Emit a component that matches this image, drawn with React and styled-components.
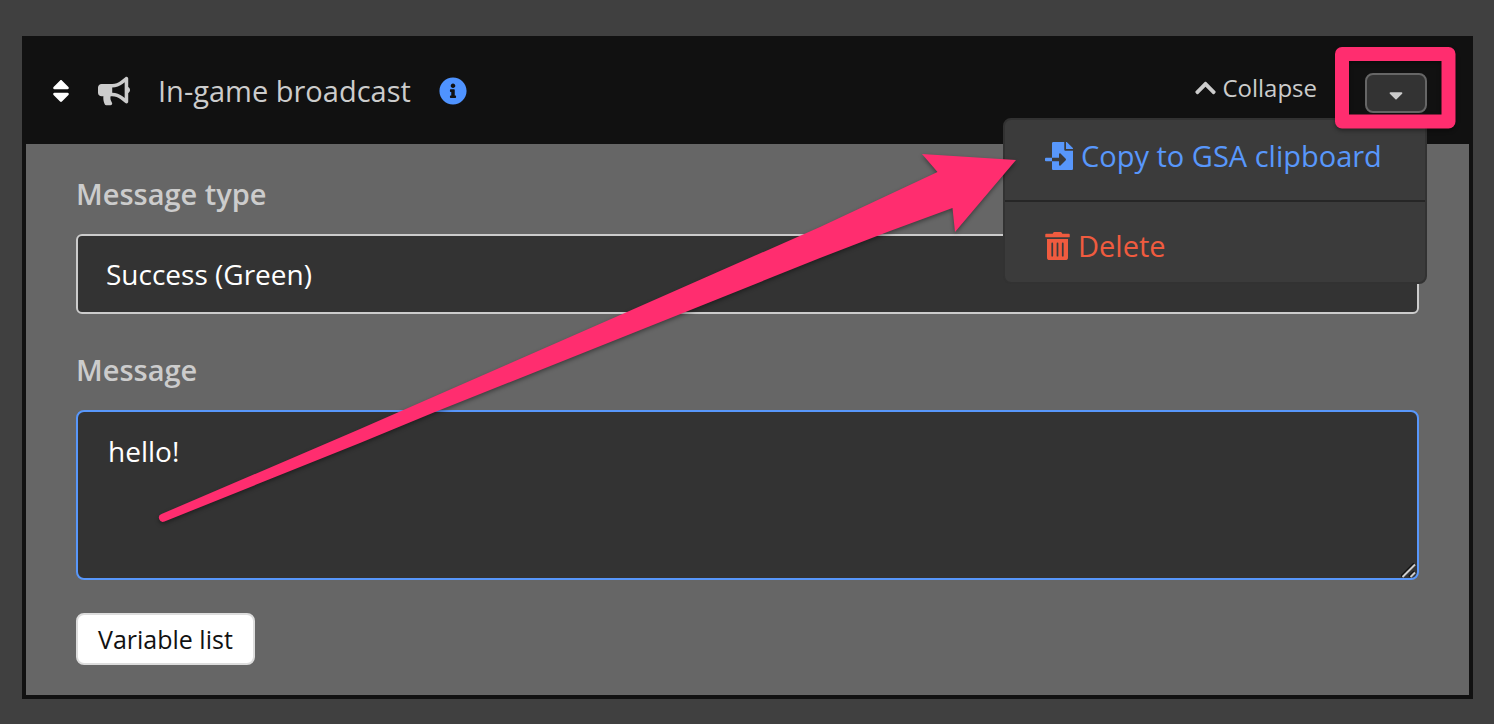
import React from "react";
import styled, { createGlobalStyle } from "styled-components";
import {
  FaSort,
  FaBullhorn,
  FaInfoCircle,
  FaCaretDown,
  FaChevronUp,
  FaFileImport,
  FaTrashAlt,
} from "react-icons/fa";

const GlobalStyle = createGlobalStyle`
  *, *::before, *::after { box-sizing: border-box; }
  body {
    margin: 0;
    background: #404040;
    color: #ccc;
    font-family: "Open Sans", sans-serif;
    font-size: 28px;
    line-height: 40px;
  }
  button, select, textarea { font: inherit; }
`;

const Page = styled.main`
  position: relative;
  padding: 36px 21px 26px 22px;
`;

const Card = styled.section`
  background: #666;
  border: 4px solid #111;
`;

const CardHeader = styled.header`
  display: flex;
  align-items: center;
  height: 104px;
  padding: 0 42px 2px 26px;
  background: #111;
`;

const IconButton = styled.button`
  display: flex;
  padding: 0;
  border: 0;
  background: none;
  color: ${(p) => p.$color};

  svg {
    width: ${(p) => p.$width}px;
    height: 28px;
  }
`;

const TypeIcon = styled(FaBullhorn)`
  margin-left: 28px;
  font-size: 32px;
`;

const Title = styled.h1`
  margin: 0 28px;
  font-size: 29px;
  font-weight: 400;
`;

const Actions = styled.div`
  display: flex;
  align-items: center;
  gap: 48px;
  margin-left: auto;
`;

const CollapseButton = styled.button`
  display: flex;
  align-items: center;
  gap: 6px;
  padding: 0 0 6px;
  border: 0;
  background: none;
  color: #ccc;
  font-size: 24px;
  line-height: 36px;

  svg { width: 21px; }
`;

const MenuWrap = styled.div`
  position: relative;
`;

const MenuToggle = styled.button`
  display: flex;
  align-items: center;
  justify-content: center;
  width: 62px;
  height: 40px;
  margin-top: 4px;
  padding: 4px 0 0;
  border: 2px solid #666;
  border-radius: 8px;
  background: #333;
  color: #ccc;

  svg { font-size: 22px; }
`;

const Menu = styled.ul`
  position: absolute;
  z-index: 1;
  top: calc(100% + 5px);
  right: 0;
  width: 424px;
  margin: 0;
  padding: 0;
  list-style: none;
  background: #3b3b3b;
  border: 2px solid #323232;
  border-radius: 8px;
`;

const MenuItem = styled.li`
  & + & {
    margin-top: 8px;
    padding-top: 8px;
    border-top: 2px solid #262626;
  }
`;

const MenuLink = styled.a`
  display: flex;
  align-items: center;
  gap: 8px;
  height: 72px;
  padding: 0 40px;
  color: ${(p) => p.$color};
  font-size: 29px;
  text-decoration: none;
  white-space: nowrap;

  svg {
    flex: none;
    width: ${(p) => p.$iconWidth}px;
    height: 28px;
  }
`;

const CardBody = styled.div`
  display: flex;
  flex-direction: column;
  align-items: flex-start;
  padding: 30px 50px;
`;

const Label = styled.label`
  margin-bottom: 20px;
  font-size: 29px;
  font-weight: 600;
`;

const Select = styled.select`
  width: 100%;
  height: 80px;
  margin-bottom: 36px;
  padding: 0 28px;
  appearance: none;
  background: #333;
  border: 2px solid #ccc;
  border-radius: 6px;
  color: #fff;
`;

const TextAreaWrap = styled.div`
  position: relative;
  width: 100%;
  margin-bottom: 33px;
`;

const TextArea = styled.textarea`
  display: block;
  width: 100%;
  height: 170px;
  padding: 19px 30px;
  background: #333;
  border: 2px solid #5897fb;
  border-radius: 8px;
  outline: 0;
  color: #fff;
  resize: none;
`;

const ResizeGrip = styled.svg`
  position: absolute;
  right: 2px;
  bottom: 2px;
  width: 16px;
  height: 16px;
  pointer-events: none;
`;

const ListButton = styled.button`
  height: 52px;
  padding: 0 20px;
  background: #fff;
  border: 2px solid #ddd;
  border-radius: 8px;
  color: #111;
  font-size: 25px;
  line-height: 36px;
`;

const Annotation = styled.svg`
  position: absolute;
  z-index: 2;
  top: 0;
  right: 0;
  width: 1494px;
  height: 724px;
  pointer-events: none;
  filter: drop-shadow(0 2px 2px rgba(0, 0, 0, 0.4));
`;

export default function App() {
  return (
    <Page>
      <GlobalStyle />
      <Card>
        <CardHeader>
          <IconButton aria-label="Reorder" $color="#fff" $width={18}><FaSort /></IconButton>
          <TypeIcon />
          <Title>In-game broadcast</Title>
          <IconButton aria-label="Information" $color="#4f93ff" $width={28}><FaInfoCircle /></IconButton>
          <Actions>
            <CollapseButton><FaChevronUp />Collapse</CollapseButton>
            <MenuWrap>
              <MenuToggle aria-label="More actions" aria-expanded="true"><FaCaretDown /></MenuToggle>
              <Menu>
                <MenuItem><MenuLink href="#copy" $color="#5897fb" $iconWidth={28}><FaFileImport />Copy to GSA clipboard</MenuLink></MenuItem>
                <MenuItem><MenuLink href="#delete" $color="#f05b3f" $iconWidth={25}><FaTrashAlt />Delete</MenuLink></MenuItem>
              </Menu>
            </MenuWrap>
          </Actions>
        </CardHeader>
        <CardBody>
          <Label htmlFor="message-type">Message type</Label>
          <Select id="message-type" defaultValue="success">
            <option value="success">Success (Green)</option>
          </Select>
          <Label htmlFor="message">Message</Label>
          <TextAreaWrap>
            <TextArea id="message" defaultValue="hello!" />
            <ResizeGrip viewBox="0 0 16 16" aria-hidden="true">
              <path d="M0 14.5 L13 1.5 M8 14.5 L13 9.5" stroke="#111" strokeWidth="2" />
              <path d="M1.5 15 L14 2.5 M9.5 15 L14 10.5" stroke="#ccc" strokeWidth="2" />
            </ResizeGrip>
          </TextAreaWrap>
          <ListButton>Variable list</ListButton>
        </CardBody>
      </Card>
      <Annotation viewBox="0 0 1494 724" aria-hidden="true">
        <path fill="#ff2d6f" d="M161.5 514 L360 429 L400 411.5 L627 312 L820 227 L937.5 172 L922 154 L1016 160 L955 232 L952.5 208 L890 231 L820 258 L683 313 L435 412 L360 443 L164.5 521.5 A4 4 0 0 1 161.5 514 Z" />
        <rect x="1342" y="54" width="106.5" height="67.5" fill="none" stroke="#ff2d6f" strokeWidth="14" strokeLinejoin="round" />
      </Annotation>
    </Page>
  );
}
